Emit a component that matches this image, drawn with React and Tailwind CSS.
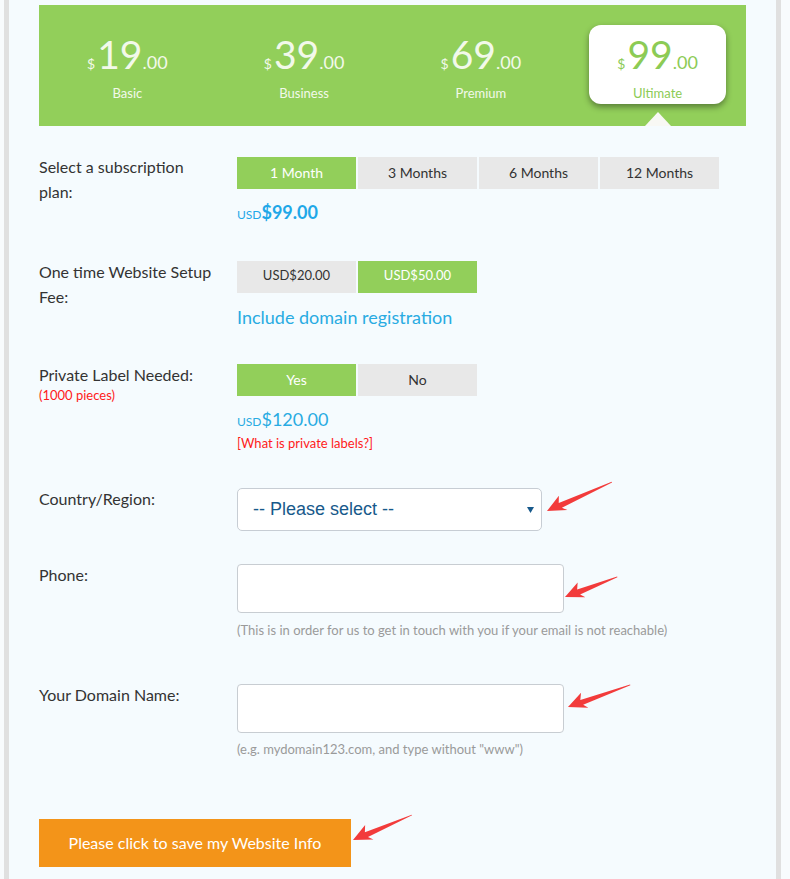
import React from "react";

const plans = [
  { price: "19", name: "Basic" },
  { price: "39", name: "Business" },
  { price: "69", name: "Premium" },
  { price: "99", name: "Ultimate", active: true },
];

function Tab({ children, active }) {
  return (
    <div
      className={
        "w-[119px] h-[32px] pb-[2px] flex items-center justify-center text-[14px] " +
        (active ? "bg-[#92cf5a] text-white" : "bg-[#e8e8e8] text-[#333]")
      }
    >
      {children}
    </div>
  );
}

function Arrow({ x, y, angle, len }) {
  const pts = `0,0 17,-9 14,-2.6 ${len},-0.4 ${len},0.4 15,3 19,7.5`;
  return (
    <polygon
      points={pts}
      fill="#f23b3b"
      transform={`translate(${x} ${y}) rotate(${angle})`}
    />
  );
}

export default function App() {
  return (
    <div className="relative w-[790px] h-[879px] overflow-hidden bg-[#f8fbfd] font-[Lato,'Noto_Sans',sans-serif] text-[#333]">
      <div className="ml-[4px] w-[777px] h-full border-x-[5px] border-[#e0e0e0] bg-[#f5fbfe] px-[30px] pt-[5px]">
        {/* Banner */}
        <div className="grid grid-cols-4 h-[121px] bg-[#92cf5a]">
          {plans.map((p) => (
            <div key={p.name} className="flex flex-col items-center pt-[20px]">
              <div
                className={
                  "w-[137px] h-[79px] rounded-[12px] flex flex-col items-center pt-[7px] " +
                  (p.active
                    ? "bg-white text-[#8ccb55] shadow-[0_3px_6px_rgba(0,0,0,0.4)]"
                    : "text-[#f2f9ea]")
                }
              >
                <div className="h-[44px] flex items-baseline leading-[44px]">
                  <span className="text-[14px] leading-[44px] mr-[2px]">$</span>
                  <span className="text-[39px] leading-[44px]">{p.price}</span>
                  <span className="text-[18px] leading-[44px]">.00</span>
                </div>
                <div className="mt-[8px] h-[18px] text-[13px] leading-[18px]">{p.name}</div>
              </div>
              {p.active ? (
                <div className="mt-auto w-0 h-0 border-x-[13px] border-b-[14px] border-x-transparent border-b-[#f8f8f4]" />
              ) : null}
            </div>
          ))}
        </div>

        {/* Row 1 */}
        <div className="grid grid-cols-[198px_1fr] mt-[31px]">
          <div className="w-[176px] text-[16px] leading-[25px] -mt-[3px]">
            Select a subscription plan:
          </div>
          <div>
            <div className="flex gap-[2px]">
              <Tab active>1 Month</Tab>
              <Tab>3 Months</Tab>
              <Tab>6 Months</Tab>
              <Tab>12 Months</Tab>
            </div>
            <div className="mt-[11px] h-[24px] flex items-baseline text-[#1fa8e8]">
              <span className="text-[12px] leading-[24px]">USD</span>
              <span className="text-[18px] leading-[24px] font-bold">$99.00</span>
            </div>
          </div>
        </div>

        {/* Row 2 */}
        <div className="grid grid-cols-[198px_1fr] mt-[37px]">
          <div className="w-[176px] text-[16px] leading-[25px] -mt-[2px]">
            One time Website Setup Fee:
          </div>
          <div>
            <div className="flex gap-[2px]">
              <Tab>
                <span className="text-[13px]">USD$20.00</span>
              </Tab>
              <Tab active>
                <span className="text-[13px]">USD$50.00</span>
              </Tab>
            </div>
            <div className="mt-[12px] h-[24px] leading-[24px] text-[18px] text-[#29abe2]">
              Include domain registration
            </div>
          </div>
        </div>

        {/* Row 3 */}
        <div className="grid grid-cols-[198px_1fr] mt-[35px]">
          <div className="w-[176px]">
            <div className="text-[16px] leading-[25px] -mt-[2px]">Private Label Needed:</div>
            <div className="text-[13px] leading-[17px] text-[#ff1a1a]">(1000 pieces)</div>
          </div>
          <div>
            <div className="flex gap-[2px]">
              <Tab active>Yes</Tab>
              <Tab>No</Tab>
            </div>
            <div className="mt-[11px] h-[24px] flex items-baseline text-[#29abe2]">
              <span className="text-[12px] leading-[24px]">USD</span>
              <span className="text-[18px] leading-[24px]">$120.00</span>
            </div>
            <div className="mt-[4px] h-[17px] text-[13px] leading-[17px] text-[#ff1a1a]">
              [What is private labels?]
            </div>
          </div>
        </div>

        {/* Row 4 */}
        <div className="grid grid-cols-[198px_1fr] mt-[36px]">
          <div className="text-[16px] leading-[25px] -mt-[2px]">Country/Region:</div>
          <div>
            <div className="w-[305px] h-[43px] border border-[#c7cdd4] rounded-[5px] bg-white flex items-center justify-between pl-[15px] pr-[7px]">
              <span className="font-['Liberation_Sans',Arial,sans-serif] text-[18px] text-[#17598b]">
                -- Please select --
              </span>
              <svg width="7" height="6" viewBox="0 0 7 6">
                <polygon points="0,0 7,0 3.5,6" fill="#17598b" />
              </svg>
            </div>
          </div>
        </div>

        {/* Row 5 */}
        <div className="grid grid-cols-[198px_1fr] mt-[33px]">
          <div className="text-[16px] leading-[25px] -mt-[2px]">Phone:</div>
          <div>
            <input
              type="text"
              className="block w-[327px] h-[49px] border border-[#c8cdd2] rounded-[4px] bg-white outline-none"
            />
            <div className="mt-[9px] h-[17px] text-[13px] leading-[17px] text-[#9a9a9a]">
              (This is in order for us to get in touch with you if your email is not reachable)
            </div>
          </div>
        </div>

        {/* Row 6 */}
        <div className="grid grid-cols-[198px_1fr] mt-[45px]">
          <div className="text-[16px] leading-[25px] -mt-[2px]">Your Domain Name:</div>
          <div>
            <input
              type="text"
              className="block w-[327px] h-[49px] border border-[#c8cdd2] rounded-[4px] bg-white outline-none"
            />
            <div className="mt-[8px] h-[17px] text-[13px] leading-[17px] text-[#9a9a9a]">
              (e.g. mydomain123.com, and type without "www")
            </div>
          </div>
        </div>

        {/* Button */}
        <button className="mt-[61px] w-[312px] h-[48px] bg-[#f39419] text-white text-[16px] flex items-center justify-center">
          Please click to save my Website Info
        </button>
      </div>

      {/* Annotation arrows */}
      <svg className="absolute inset-0 pointer-events-none" width="790" height="879">
        <Arrow x={547} y={511} angle={-24} len={71} />
        <Arrow x={565} y={597} angle={-21} len={56} />
        <Arrow x={568} y={707} angle={-19.5} len={66} />
        <Arrow x={353} y={840} angle={-23} len={64} />
      </svg>
    </div>
  );
}
